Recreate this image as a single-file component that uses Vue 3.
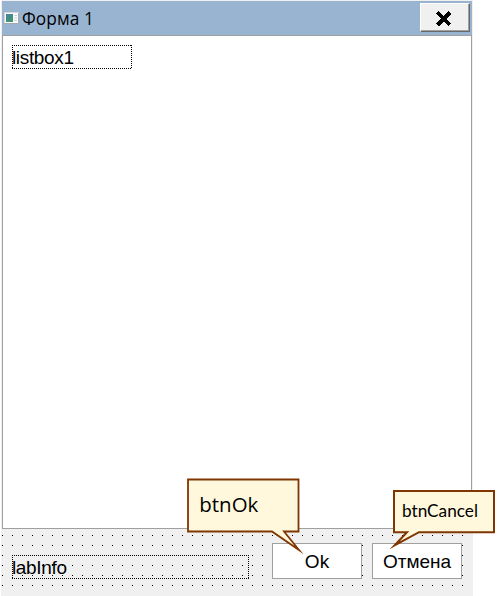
<script setup>
const title = 'Форма 1'
const callouts = [
  { cls: 'ok', label: 'btnOk', w: 114, h: 76, stroke: 1.8, d: 'M1 1.500H111.500V53.500H97L112 72L85 53.500H1Z', x: 12.3, y: 34, size: 20.5, len: 59 },
  { cls: 'cancel', label: 'btnCancel', w: 106, h: 64, stroke: 2, d: 'M5 3H105V44.200H30L5.500 57.500L18 44.200H5Z', x: 13, y: 29, size: 17.3, len: 76 },
]
</script>

<template>
  <main class="stage">
    <section class="window">
      <header class="titlebar">
        <svg class="app-icon" width="15" height="13" viewBox="0 0 15 13">
          <defs>
            <linearGradient id="pane" x1="0" y1="0" x2="0.5" y2="1">
              <stop offset="0" stop-color="#4a80a8" />
              <stop offset="1" stop-color="#3c9a6c" />
            </linearGradient>
          </defs>
          <rect x="0.5" y="0.5" width="14" height="11" fill="#fafafa" stroke="#d8d8d8" />
          <path d="M0 11.500H14.500V1" fill="none" stroke="#a3a9ae" />
          <rect x="2" y="2" width="7" height="8" fill="url(#pane)" />
          <path d="M10.500 3.500H13M10.500 6H13M10.500 8.500H13" stroke="#c8d0d6" />
        </svg>
        <h1>{{ title }}</h1>
        <button class="close" aria-label="Закрыть">
          <svg width="16" height="16" viewBox="0 0 16 16" shape-rendering="crispEdges">
            <path d="M1.500 1.500L14 14M14 1.500L1.500 14" stroke="#000" stroke-width="3.600" />
          </svg>
        </button>
      </header>
      <div class="list"><div class="field listbox"><span>listbox1</span></div></div>
      <footer class="panel">
        <div class="field info"><span>labInfo</span></div>
        <button class="action">Ok</button>
        <button class="action">Отмена</button>
      </footer>
    </section>
    <svg v-for="c in callouts" :key="c.cls" class="callout" :class="c.cls" :width="c.w" :height="c.h">
      <path :d="c.d" fill="#fff8dc" stroke="#803600" :stroke-width="c.stroke" stroke-miterlimit="12" />
      <text :x="c.x" :y="c.y" :font-size="c.size" :textLength="c.len" lengthAdjust="spacingAndGlyphs">{{ c.label }}</text>
    </svg>
  </main>
</template>

<style>
body {
  background: #fff;
}
</style>

<style scoped>
.stage {
  position: relative;
  width: 498px;
  height: 596px;
  overflow: hidden;
}
.window {
  box-sizing: border-box;
  width: 473px;
  height: 596px;
  padding-left: 2px;
  display: flex;
  flex-direction: column;
  background: #f0f0f0;
  box-shadow: inset 1px 0 #fff;
}
.titlebar {
  box-sizing: border-box;
  height: 35px;
  width: 470px;
  border-top: 1px solid #f0f0f0;
  padding: 0 2px;
  display: flex;
  align-items: center;
  background: #99b4d1;
}
.app-icon {
  margin: 0 3px 0 0;
}
h1 {
  margin: 1px 0 0;
  font: 400 17.3px/24px "Open Sans", sans-serif;
  letter-spacing: 0.1px;
  color: #000;
}
button {
  box-sizing: border-box;
  padding: 0;
  margin: 0;
  font-family: "Liberation Sans", sans-serif;
  border-radius: 0;
}
.close {
  width: 50px;
  height: 29px;
  margin: 0 0 1px auto;
  display: flex;
  justify-content: center;
  align-items: center;
  background: #f0f0f0;
  border: 1px solid;
  border-color: #fff #696969 #696969 #fff;
  box-shadow: inset -1px -1px #a0a0a0;
}
.close svg {
  margin: 2px 2px 0 0;
}
.list {
  box-sizing: border-box;
  width: 470px;
  height: 494px;
  border: 1px solid #a0a0a0;
  padding: 9px;
  background: #fff;
}
.field {
  box-sizing: border-box;
  height: 24px;
  font: 19px/26px "Liberation Sans", sans-serif;
  letter-spacing: -0.35px;
  color: #000;
  background:
    repeating-linear-gradient(90deg, #000 0 1px, transparent 1px 2px) 0 0 / 100% 1px no-repeat,
    repeating-linear-gradient(90deg, #000 0 1px, transparent 1px 2px) 0 100% / 100% 1px no-repeat,
    repeating-linear-gradient(#000 0 1px, transparent 1px 2px) 0 0 / 1px 100% no-repeat,
    repeating-linear-gradient(#000 0 1px, transparent 1px 2px) 100% 0 / 1px 100% no-repeat;
}
.field span {
  display: block;
}
.listbox {
  width: 120px;
}
.info {
  width: 237px;
  margin-top: 12px;
}
.panel {
  box-sizing: border-box;
  width: 470px;
  height: 67px;
  display: flex;
  align-items: flex-start;
  gap: 10px;
  padding: 14px 0 0 10px;
  border-bottom: 1px solid #f0f0f0;
  background: conic-gradient(from 90deg at 9px 9px, #000 90deg, transparent 0) -9px -3px / 10px 10px;
}
.action {
  width: 90px;
  height: 36px;
  background: #fff;
  border: 1px solid #a0a0a0;
  font-size: 19px;
  line-height: 34px;
  padding-top: 1px;
  color: #000;
}
.info + .action {
  margin-left: 13px;
}
.callout {
  position: absolute;
  overflow: visible;
}
.callout.ok {
  left: 187px;
  top: 478px;
  font-family: "Open Sans", sans-serif;
}
.callout.cancel {
  left: 389px;
  top: 488px;
  font-family: Lato, sans-serif;
}
</style>
